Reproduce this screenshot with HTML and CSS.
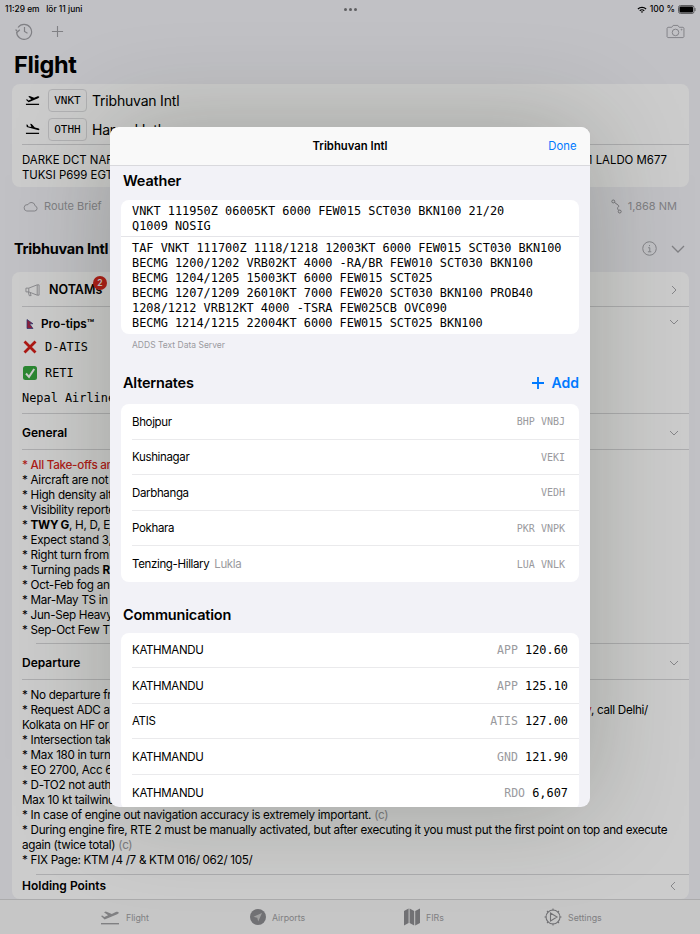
FILE: index.html
```html
<!DOCTYPE html>
<html lang="sv">
<head>
<meta charset="utf-8">
<title>Flight</title>
<link rel="stylesheet" href="styles.css">
</head>
<body>
<div class="app">
  <main class="main">
    <div class="status">
      <span class="clock">11:29 em&nbsp;&nbsp; lör 11 juni</span>
      <span class="dots"><i></i><i></i><i></i></span>
      <span class="sys">
        <svg class="wifi" viewBox="0 0 20 14"><path d="M1 5a13 13 0 0 1 18 0l-1.700 1.800a10.500 10.500 0 0 0-14.600 0zM4.700 8.600a8 8 0 0 1 10.600 0l-1.700 1.700a5.500 5.500 0 0 0-7.200 0zM7.800 11.500a3.500 3.500 0 0 1 4.400 0L10 14z"/></svg>
        <span>100 %</span>
        <svg class="battery" viewBox="0 0 18 9"><rect x=".5" y=".5" width="15.500" height="8" rx="2" fill="none" stroke="#77777a"/><rect x="1.500" y="1.500" width="13.500" height="6" rx="1" fill="#000"/><rect x="16.500" y="3" width="1" height="3" fill="#77777a"/></svg>
      </span>
    </div>
    <div class="toolbar">
      <div class="tool-left">
        <svg class="ico18" viewBox="0 0 18 18"><path d="M3 5.500A7.500 7.500 0 1 1 1.600 10M.6 7.500l2 2.300 2.200-2.100M9.500 5v4.500l3 1.800"/></svg>
        <svg class="ico-plus" viewBox="0 0 14 14"><path d="M7 1v12M1 7h12"/></svg>
      </div>
      <svg class="ico-cam" viewBox="0 0 20 16"><path d="M2 3.500h4l1.500-2h5l1.500 2h4a1.500 1.500 0 0 1 1 1v9a1.500 1.500 0 0 1-1 1H2a1.500 1.500 0 0 1-1-1v-9a1.500 1.500 0 0 1 1-1z"/><circle cx="10" cy="9" r="3.500"/><circle cx="16.500" cy="6" r=".5"/></svg>
    </div>
    <h1 class="title">Flight</h1>

    <section class="card flightcard">
      <div class="ap-row first">
        <svg class="plane" viewBox="0 0 16 12"><path d="M1 5.800l1.200-.6 1.500 1.200 3-1.300L3.500 2.300l1.500-.6 4.700 2 3.300-1.500c1-.4 2-.2 2.200.4.200.5-.3 1-1.200 1.400L3.800 8.500z"/><rect x="1" y="10" width="14" height="1.300"/></svg>
        <span class="code">VNKT</span><span class="apname">Tribhuvan Intl</span>
      </div>
      <div class="ap-row">
        <svg class="plane" viewBox="0 0 16 12"><path d="M1.500 1.200l1.300.2.800 1.800 3.200.7L5.500.4l1.600.3 3.400 3.700 3.400.8c1 .3 1.600.9 1.400 1.500-.1.500-.9.700-1.800.4L1.900 3.800z"/><rect x="1" y="10" width="14" height="1.300"/></svg>
        <span class="code">OTHH</span><span class="apname">Hamad Intl</span>
      </div>
      <div class="route">
        <div class="split"><span>DARKE DCT NARAN</span><span>1 LALDO M677</span></div>
        <div>TUKSI P699 EGTUK</div>
      </div>
    </section>

    <div class="meta">
      <span class="meta-item">
        <svg class="cloud" viewBox="0 0 16 11"><path d="M4 10.300h8.500a2.800 2.800 0 0 0 .4-5.500A4 4 0 0 0 5.300 3.500 3.400 3.400 0 0 0 4 10.300z"/></svg>
        Route Brief
      </span>
      <span class="meta-item">
        <svg class="routeico" viewBox="0 0 12 16"><circle cx="2.500" cy="2.500" r="1.600"/><circle cx="9.500" cy="13.500" r="1.600"/><path d="M3.800 3.500l4.200 3.200c1 .8.300 1.600-.5 2.200-.7.500-.4 1.900.8 3.200"/></svg>
        1,868 NM
      </span>
    </div>

    <div class="ap-head">
      <h2>Tribhuvan Intl</h2>
      <span class="ap-head-icons">
        <svg class="info" viewBox="0 0 16 16"><circle cx="8" cy="8" r="7.200"/><path d="M6.500 7.200h1.800v4M6.300 11.500h3.600M8 4.300v1.200"/></svg>
        <svg class="chev-big" viewBox="0 0 14 8"><path d="M1 1l6 6 6-6"/></svg>
      </span>
    </div>

    <section class="card infocard">
      <div class="row notams">
        <svg class="mega" viewBox="0 0 16 14"><path d="M1 5h3v4H1zM4 5l9-3.500v11L4 9M13 1.500h2v11h-2M3.500 9l1 4h2l-1-3.300"/></svg>
        <strong>NOTAMs</strong><span class="count">2</span>
        <svg class="chev right" viewBox="0 0 6 10"><path d="M1 1l4 4-4 4"/></svg>
      </div>
      <div class="tips">
        <div class="pro">
          <svg class="flag" viewBox="0 0 8 10"><path d="M1 .5l6 4.300H3.500L7 9.500H1z" fill="#b32646" stroke="#2b3f8c" stroke-width=".7"/></svg>
          <strong>Pro-tips™</strong>
          <svg class="chev down" viewBox="0 0 10 6"><path d="M1 1l4 4 4-4"/></svg>
        </div>
        <div class="mono-row">
          <svg class="mark" viewBox="0 0 14 14"><path d="M1.500 1.500l11 11M12.500 1.500l-11 11" fill="none" stroke="#d9201a" stroke-width="2.800"/></svg>
          <span>D-ATIS</span>
        </div>
        <div class="mono-row">
          <svg class="mark" viewBox="0 0 14 14"><rect width="14" height="14" rx="2.500" fill="#36a93f"/><path d="M3 7.500l3 3.300 5.200-7.800" fill="none" stroke="#fff" stroke-width="2"/></svg>
          <span>RETI</span>
        </div>
        <div class="mono-plain">Nepal Airlines</div>
      </div>
      <div class="row head"><strong>General</strong><svg class="chev down" viewBox="0 0 10 6"><path d="M1 1l4 4 4-4"/></svg></div>
      <div class="body first-body">
        <div class="red">* All Take-offs and Landings</div>
        <div>* Aircraft are not allowed</div>
        <div>* High density altitude</div>
        <div>* Visibility reported</div>
        <div>* <b>TWY G</b>, H, D, E closed</div>
        <div>* Expect stand 3, 4</div>
        <div>* Right turn from RWY</div>
        <div>* Turning pads <b>RWY</b></div>
        <div>* Oct-Feb fog and mist</div>
        <div>* Mar-May TS in afternoon</div>
        <div>* Jun-Sep Heavy rain</div>
        <div>* Sep-Oct Few TS</div>
      </div>
      <div class="row head"><strong>Departure</strong><svg class="chev down" viewBox="0 0 10 6"><path d="M1 1l4 4 4-4"/></svg></div>
      <div class="body">
        <div>* No departure from RWY 20</div>
        <div class="split far"><span>* Request ADC at least 30 min</span><span><em class="redmark">y</em>, call Delhi/</span></div>
        <div>Kolkata on HF or SAT</div>
        <div>* Intersection take-off</div>
        <div>* Max 180 in turn</div>
        <div>* EO 2700, Acc 6500</div>
        <div>* D-TO2 not authorised</div>
        <div>Max 10 kt tailwind</div>
        <div>* In case of engine out navigation accuracy is extremely important. <span class="cite">(c)</span></div>
        <div>* During engine fire, RTE 2 must be manually activated, but after executing it you must put the first point on top and execute</div>
        <div>again (twice total) <span class="cite">(c)</span></div>
        <div>* FIX Page: KTM /4 /7 &amp; KTM 016/ 062/ 105/</div>
      </div>
      <div class="row head last"><strong>Holding Points</strong><svg class="chev left" viewBox="0 0 6 10"><path d="M5 1L1 5l4 4"/></svg></div>
    </section>
  </main>

  <nav class="tabs">
    <span class="tab tab1"><svg class="t-flight" viewBox="0 0 20 16"><path d="M1 7l1.300-.6 2 1.500 3.800-1.600L4 3.200 5.800 2.500l6 2.400 4-1.800c1.200-.5 2.600-.3 2.900.4.200.6-.4 1.200-1.500 1.700L4.600 10.500z"/><rect x="1" y="14" width="18" height="1.400"/></svg>Flight</span>
    <span class="tab tab2"><svg class="t-air" viewBox="0 0 16 16"><circle cx="8" cy="8" r="8"/><path d="M12 4L3.500 7.800 7.300 8.700 8.200 12.500z" fill="#c9c9c9"/></svg>Airports</span>
    <span class="tab tab3"><svg class="t-map" viewBox="0 0 16 18"><path d="M0 3l4.600-2.500V15L0 17.500zM5.600.5L10.200 3v14.500L5.600 15zM11.200 3L16 .5V15l-4.800 2.500z"/></svg>FIRs</span>
    <span class="tab tab4"><svg class="t-gear" viewBox="0 0 18 18"><circle cx="9" cy="9" r="7"/><path d="M9 .5v2M9 15.500v2M.5 9h2M15.500 9h2M3 3l1.400 1.400M13.600 13.600L15 15M3 15l1.400-1.400M13.600 4.400L15 3M6.500 5v8L13 9z"/></svg>Settings</span>
  </nav>

  <div class="scrim">
    <div class="modal">
      <header class="m-head"><span class="m-title">Tribhuvan Intl</span><span class="done">Done</span></header>
      <div class="m-body">
        <h3 class="m-h first-h">Weather</h3>
        <div class="m-card wx">
          <div class="metar">VNKT 111950Z 06005KT 6000 FEW015 SCT030 BKN100 21/20<br>Q1009 NOSIG</div>
          <div class="taf">TAF VNKT 111700Z 1118/1218 12003KT 6000 FEW015 SCT030 BKN100<br>BECMG 1200/1202 VRB02KT 4000 -RA/BR FEW010 SCT030 BKN100<br>BECMG 1204/1205 15003KT 6000 FEW015 SCT025<br>BECMG 1207/1209 26010KT 7000 FEW020 SCT030 BKN100 PROB40<br>1208/1212 VRB12KT 4000 -TSRA FEW025CB OVC090<br>BECMG 1214/1215 22004KT 6000 FEW015 SCT025 BKN100</div>
        </div>
        <p class="source">ADDS Text Data Server</p>

        <div class="m-h-row">
          <h3 class="m-h">Alternates</h3>
          <span class="add"><svg viewBox="0 0 13 13"><path d="M6.500 0v13M0 6.500h13"/></svg>Add</span>
        </div>
        <div class="m-card list">
          <div class="item"><span>Bhojpur</span><span class="ids">BHP VNBJ</span></div>
          <div class="item"><span>Kushinagar</span><span class="ids">VEKI</span></div>
          <div class="item"><span>Darbhanga</span><span class="ids">VEDH</span></div>
          <div class="item"><span>Pokhara</span><span class="ids">PKR VNPK</span></div>
          <div class="item"><span>Tenzing-Hillary <span class="sub">Lukla</span></span><span class="ids">LUA VNLK</span></div>
        </div>

        <h3 class="m-h comm-h">Communication</h3>
        <div class="m-card list">
          <div class="item"><span>KATHMANDU</span><span class="freq"><span class="kind">APP</span> 120.60</span></div>
          <div class="item"><span>KATHMANDU</span><span class="freq"><span class="kind">APP</span> 125.10</span></div>
          <div class="item"><span>ATIS</span><span class="freq"><span class="kind">ATIS</span> 127.00</span></div>
          <div class="item"><span>KATHMANDU</span><span class="freq"><span class="kind">GND</span> 121.90</span></div>
          <div class="item"><span>KATHMANDU</span><span class="freq"><span class="kind">RDO</span> 6,607</span></div>
        </div>
      </div>
    </div>
  </div>
</div>
</body>
</html>
```

FILE: styles.css
```css
* { box-sizing: border-box; }
html, body { margin: 0; padding: 0; }
body {
  width: 700px;
  height: 934px;
  overflow: hidden;
  font-family: Inter, "Liberation Sans", sans-serif;
  color: #000;
  background: #f2f2f7;
}
h1, h2, h3, p { margin: 0; }
svg { display: block; flex: none; }
.app {
  position: relative;
  width: 700px;
  height: 934px;
  display: flex;
  flex-direction: column;
  background: #f2f2f7;
}
.main { flex: 1; min-height: 0; overflow: hidden; }

.status {
  height: 17px;
  padding: 1px 4px 0 5px;
  display: grid;
  grid-template-columns: 1fr auto 1fr;
  align-items: center;
  font-size: 8.400px;
  font-weight: 500;
}
.dots { display: flex; gap: 2px; }
.dots i { width: 3px; height: 3px; border-radius: 50%; background: #77777a; }
.sys { display: flex; align-items: center; justify-content: flex-end; gap: 3px; font-size: 8.500px; }
.wifi { width: 10px; height: 7px; fill: #000; }
.battery { width: 18px; height: 9px; }

.toolbar {
  height: 28px;
  padding: 0 15px;
  display: flex;
  align-items: center;
  justify-content: space-between;
}
.tool-left { display: flex; align-items: center; gap: 18px; }
.ico18 { width: 18px; height: 18px; fill: none; stroke: #a0a0a6; stroke-width: 1.200; }
.ico-plus { width: 13px; height: 13px; fill: none; stroke: #a0a0a6; stroke-width: 1.200; }
.ico-cam { width: 19px; height: 15px; fill: none; stroke: #a0a0a6; stroke-width: 1; }

.title {
  height: 39px;
  padding-left: 14px;
  font-size: 23.500px;
  line-height: 39px;
  font-weight: 700;
  letter-spacing: -.35px;
}

.card { margin: 0 11px 0 12px; background: #fff; border-radius: 8px; }
.flightcard { height: 103px; padding: 0 0 0 10px; }
.ap-row { height: 30px; display: flex; align-items: center; padding: 2px 0 0 3px; }
.ap-row + .ap-row { height: 31px; border-bottom: 1px solid #d8d8da; padding-top: 0; }
.plane { width: 15px; height: 12px; fill: #000; }
.code {
  width: 39px;
  height: 23px;
  margin: 0 5px 0 8px;
  display: flex;
  align-items: center;
  justify-content: center;
  border: 1px solid #dedee0;
  border-radius: 4px;
  font: 11px "DejaVu Sans Mono", monospace;
}
.apname { font-size: 14px; letter-spacing: -.2px; }
.route { padding: 8px 22px 0 0; font-size: 11.400px; line-height: 15px; }
.split { display: flex; justify-content: space-between; white-space: nowrap; }

.meta {
  height: 38px;
  padding: 0 23px;
  display: flex;
  align-items: center;
  justify-content: space-between;
  color: #a0a0a5;
  font-size: 11px;
}
.meta-item { display: flex; align-items: center; gap: 6px; }
.cloud { width: 15px; height: 11px; fill: none; stroke: #a0a0a5; stroke-width: 1; }
.routeico { width: 11px; height: 15px; fill: none; stroke: #88888c; stroke-width: 1; }

.ap-head {
  height: 47px;
  padding: 0 15px 0 14px;
  display: flex;
  align-items: center;
  justify-content: space-between;
}
.ap-head h2 { font-size: 14.500px; font-weight: 700; letter-spacing: -.25px; }
.ap-head-icons { display: flex; align-items: center; gap: 14px; }
.info { width: 15px; height: 15px; fill: none; stroke: #a0a0a5; stroke-width: 1; }
.chev-big { width: 14px; height: 8px; fill: none; stroke: #a0a0a5; stroke-width: 1.300; }

.row { display: flex; align-items: center; position: relative; }
.notams { height: 35px; padding-left: 13px; font-size: 12.500px; }
.notams strong { margin-left: 9px; font-weight: 600; }
.notams::after {
  content: "";
  position: absolute;
  left: 10px;
  right: 0;
  bottom: 0;
  border-bottom: 1px solid #d8d8da;
}
.mega { width: 15px; height: 14px; fill: none; stroke: #a8a8ac; stroke-width: 1; }
.count {
  position: absolute;
  left: 81px;
  top: 4px;
  width: 14px;
  height: 14px;
  border-radius: 50%;
  background: #d9261c;
  color: #fff;
  font-size: 8.500px;
  font-weight: 600;
  display: flex;
  align-items: center;
  justify-content: center;
}
.chev { position: absolute; fill: none; stroke: #a8a8ac; stroke-width: 1; }
.chev.right { width: 6px; height: 10px; right: 12px; top: 13px; }
.chev.left { width: 6px; height: 10px; right: 13px; top: 6px; }
.chev.down { width: 10px; height: 6px; right: 10px; top: 50%; margin-top: -2px; }

.tips { margin-left: 10px; height: 107px; border-bottom: 1px solid #d8d8da; }
.pro {
  height: 27px;
  position: relative;
  display: flex;
  align-items: center;
  padding: 7px 0 0 4px;
  font-size: 11.800px;
}
.pro strong { margin-left: 7px; font-weight: 600; }
.flag { width: 8px; height: 10px; }
.mono-row {
  height: 26px;
  display: flex;
  align-items: center;
  gap: 8px;
  font: 11.900px "DejaVu Sans Mono", monospace;
}
.mark { width: 14px; height: 14px; margin-left: 1px; }
.mono-plain { font: 11.900px/24px "DejaVu Sans Mono", monospace; white-space: nowrap; }
.head {
  height: 36px;
  margin-left: 10px;
  padding-top: 2px;
  font-size: 12px;
  border-bottom: 1px solid #d8d8da;
}
.head strong { font-weight: 600; }
.head.last { height: 24px; border-bottom: 0; padding: 0 0 3px; }
.body {
  position: relative;
  margin-left: 10px;
  padding: 8px 25px 7px 0;
  font-size: 11.700px;
  letter-spacing: -.3px;
  line-height: 15px;
  white-space: nowrap;
}
.first-body { padding-bottom: 6px; }
.body::after {
  content: "";
  position: absolute;
  left: 14px;
  right: 0;
  bottom: 0;
  border-bottom: 1px solid #d8d8da;
}
.body b { font-weight: 700; }
.red { color: #d9261c; font-weight: 500; }
.far { padding-right: 16px; }
.redmark { color: #d9261c; font-style: normal; }
.cite { color: #9a9a9e; }

.tabs {
  height: 35px;
  flex: none;
  position: relative;
  background: #f8f8f8;
  border-top: 1px solid #d6d6d8;
  font-size: 8.800px;
  color: #a0a0a3;
}
.tab { position: absolute; top: 0; height: 34px; display: flex; align-items: center; gap: 6px; white-space: nowrap; }
.tab svg { fill: #8e8e92; }
.tab1 { left: 100px; }
.tab2 { left: 250px; }
.tab3 { left: 404px; }
.tab4 { left: 544px; }
.t-flight { width: 20px; height: 16px; fill: #a0a0a3 !important; }
.t-air { width: 16px; height: 16px; }
.t-map { width: 16px; height: 18px; }
.t-gear { width: 18px; height: 18px; fill: none !important; stroke: #8e8e92; stroke-width: 1.100; }

.scrim {
  position: absolute;
  inset: 0;
  display: flex;
  justify-content: center;
  padding-top: 127px;
  background: rgba(0, 0, 0, .2);
}
.modal {
  width: 480px;
  height: 680px;
  border-radius: 9px;
  overflow: hidden;
  display: flex;
  flex-direction: column;
  background: #f2f2f7;
  box-shadow: 0 0 100px rgba(30, 40, 20, .25);
}
.m-head {
  height: 39px;
  flex: none;
  position: relative;
  display: flex;
  align-items: center;
  justify-content: center;
  background: #f9f9f9;
  border-bottom: 1px solid #d9d9dd;
}
.m-title { font-size: 11.300px; font-weight: 600; }
.done { position: absolute; right: 13.500px; color: #007aff; font-size: 11.300px; }
.m-body { flex: 1; min-height: 0; overflow: hidden; padding: 0 11px; }
.m-h { font-size: 14.500px; font-weight: 600; letter-spacing: -.2px; padding-left: 2px; line-height: 20px; }
.first-h { height: 34px; padding-top: 5px; }
.m-card { background: #fff; border-radius: 8px; }
.wx { height: 134px; font: 11.900px/15px "DejaVu Sans Mono", monospace; white-space: nowrap; }
.metar { height: 37px; padding: 4px 0 0 11px; border-bottom: 1px solid #e4e4e8; }
.taf { padding: 4px 0 0 11px; }
.source { padding: 5px 0 0 11px; height: 20px; font-size: 8.500px; line-height: 12px; color: #9a9a9f; }
.m-h-row {
  height: 50px;
  padding-top: 19px;
  display: flex;
  align-items: flex-start;
  justify-content: space-between;
}
.add { display: flex; align-items: center; gap: 8px; color: #007aff; font-size: 14px; font-weight: 600; line-height: 20px; }
.add svg { width: 12px; height: 12px; fill: none; stroke: #007aff; stroke-width: 2; }
.list .item {
  height: 35.500px;
  margin-left: 11px;
  padding: 1px 14px 0 0;
  display: flex;
  align-items: center;
  justify-content: space-between;
  font-size: 11.500px;
  letter-spacing: -.35px;
  border-bottom: 1px solid #eaeaec;
}
.list .item:last-child { border-bottom: 0; }
.ids { font: 10px "DejaVu Sans Mono", monospace; color: #9a9a9e; letter-spacing: 0; }
.sub { color: #9a9a9e; margin-left: 2px; }
.comm-h { padding-top: 23px; height: 51px; }
.freq { font: 11.900px "DejaVu Sans Mono", monospace; letter-spacing: 0; margin-right: -3px; }
.kind { color: #9a9a9e; font-size: 11.500px; }
```
